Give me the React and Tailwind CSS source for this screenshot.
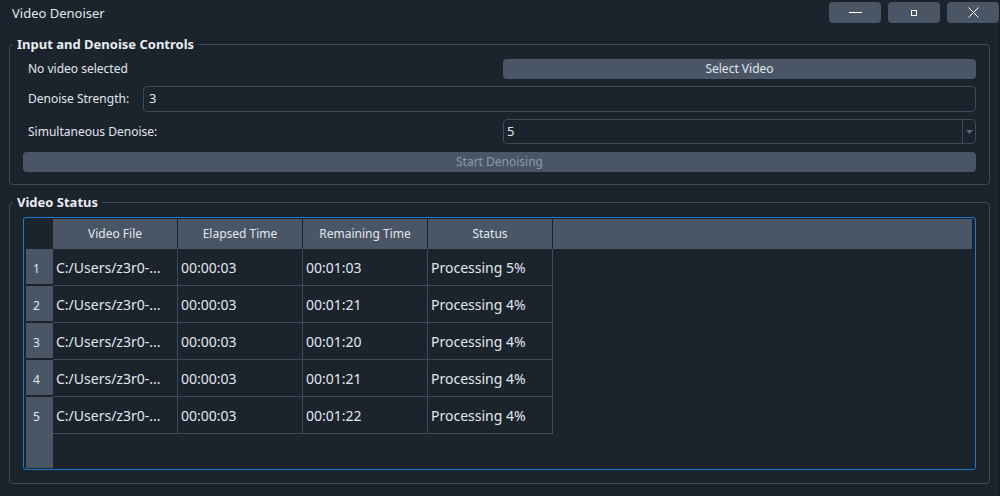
import React from 'react';

const rows = [
    { file: 'C:/Users/z3r0-...', elapsed: '00:00:03', remaining: '00:01:03', status: 'Processing 5%' },
    { file: 'C:/Users/z3r0-...', elapsed: '00:00:03', remaining: '00:01:21', status: 'Processing 4%' },
    { file: 'C:/Users/z3r0-...', elapsed: '00:00:03', remaining: '00:01:20', status: 'Processing 4%' },
    { file: 'C:/Users/z3r0-...', elapsed: '00:00:03', remaining: '00:01:21', status: 'Processing 4%' },
    { file: 'C:/Users/z3r0-...', elapsed: '00:00:03', remaining: '00:01:22', status: 'Processing 4%' },
];

const headers = ['Video File', 'Elapsed Time', 'Remaining Time', 'Status'];

const GroupBox = ({ title, className, children }) => (
    <fieldset className={`mx-[9px] border border-[#3e4a5a] rounded-[4px] ${className}`}>
        <legend className="ml-[3px] px-[4px] text-[13px] leading-[18px] font-bold text-[#e8edf2]">{title}</legend>
        {children}
    </fieldset>
);

const App = () => {
    return (
        <div
            className="w-[1000px] h-[496px] overflow-hidden bg-[#1b232d] text-[#e1e7ed] border-r border-[#151c24]"
            style={{ fontFamily: '"Noto Sans", "DejaVu Sans", sans-serif' }}
        >
            {/* title bar */}
            <div className="h-[25px] flex items-start justify-between">
                <div className="pl-[12px] pt-[5px] text-[13px] leading-[17px]">Video Denoiser</div>
                <div className="flex gap-[7px] pt-[2px]">
                    <button className="w-[52px] h-[21px] rounded-[4px] bg-[#4a5666] flex items-center justify-center">
                        <span className="block w-[13px] h-px bg-white" />
                    </button>
                    <button className="w-[52px] h-[21px] rounded-[4px] bg-[#4a5666] flex items-center justify-center">
                        <span className="block w-[6px] h-[6px] border border-white" />
                    </button>
                    <button className="w-[52px] h-[21px] rounded-[4px] bg-[#4a5666] flex items-center justify-center">
                        <svg width="11" height="11" viewBox="0 0 11 11" fill="none" stroke="white" strokeWidth="1">
                            <path d="M0.5 0.5L10.5 10.5M10.5 0.5L0.5 10.5" />
                        </svg>
                    </button>
                </div>
            </div>

            <GroupBox title="Input and Denoise Controls" className="mt-[10px]">
                <div className="px-[13px] pt-[6px] pb-[12px] flex flex-col text-[12px]">
                    <div className="grid grid-cols-[474px_1fr] gap-[6px] items-center h-[20px]">
                        <span className="pl-[5px]">No video selected</span>
                        <button className="h-[20px] rounded-[4px] bg-[#4a5666] text-[12px]">Select Video</button>
                    </div>
                    <div className="flex items-center mt-[7px] h-[26px]">
                        <span className="pl-[5px] w-[120px]">Denoise Strength:</span>
                        <div className="flex-1 h-[26px] rounded-[4px] border border-[#3e4a5a] flex items-center pl-[5px] text-[13px]">3</div>
                    </div>
                    <div className="grid grid-cols-[474px_1fr] gap-[6px] items-center mt-[7px] h-[25px]">
                        <span className="pl-[5px]">Simultaneous Denoise:</span>
                        <div className="h-[25px] rounded-[4px] border border-[#3e4a5a] flex items-stretch text-[13px]">
                            <span className="flex-1 flex items-center pl-[3px]">5</span>
                            <span className="w-[13px] border-l border-[#3e4a5a] flex items-center justify-center">
                                <svg width="7" height="4" viewBox="0 0 7 4">
                                    <path d="M0 0H7L3.5 4Z" fill="#5c6878" />
                                </svg>
                            </span>
                        </div>
                    </div>
                    <button className="mt-[8px] h-[20px] rounded-[4px] bg-[#4a5666] text-[12px] text-[#8f99a7]">Start Denoising</button>
                </div>
            </GroupBox>

            <GroupBox title="Video Status" className="mt-[8px]">
                <div className="px-[13px] pt-[6px] pb-[13px]">
                    <div className="h-[253px] border border-[#1f7acc] rounded-[3px] pl-[2px] pr-[3px] py-[1px] flex">
                        {/* vertical header */}
                        <div className="w-[27px] flex flex-col">
                            <div className="h-[30px]" />
                            <div className="flex-1 bg-[#4a5666] flex flex-col">
                                {rows.map((_, i) => (
                                    <div
                                        key={i}
                                        className="h-[37px] border-b-2 border-[#1b232d] last:border-b-0 pl-[7px] pt-[12px] text-[12px] leading-[16px]"
                                    >
                                        {i + 1}
                                    </div>
                                ))}
                            </div>
                        </div>
                        <div className="flex-1 flex flex-col">
                            <div className="h-[30px] bg-[#4a5666] flex text-[12px]">
                                {headers.map((h) => (
                                    <div key={h} className="w-[125px] border-r border-[#1b232d] flex items-center justify-center">
                                        {h}
                                    </div>
                                ))}
                            </div>
                            {rows.map((r, i) => (
                                <div key={i} className="flex h-[37px] text-[14px]">
                                    {[r.file, r.elapsed, r.remaining, r.status].map((v, j) => (
                                        <div
                                            key={j}
                                            className="w-[125px] border-r border-b border-[#3e4a5a] flex items-center pl-[3px]"
                                        >
                                            {v}
                                        </div>
                                    ))}
                                </div>
                            ))}
                        </div>
                    </div>
                </div>
            </GroupBox>
        </div>
    );
};

export default App;
